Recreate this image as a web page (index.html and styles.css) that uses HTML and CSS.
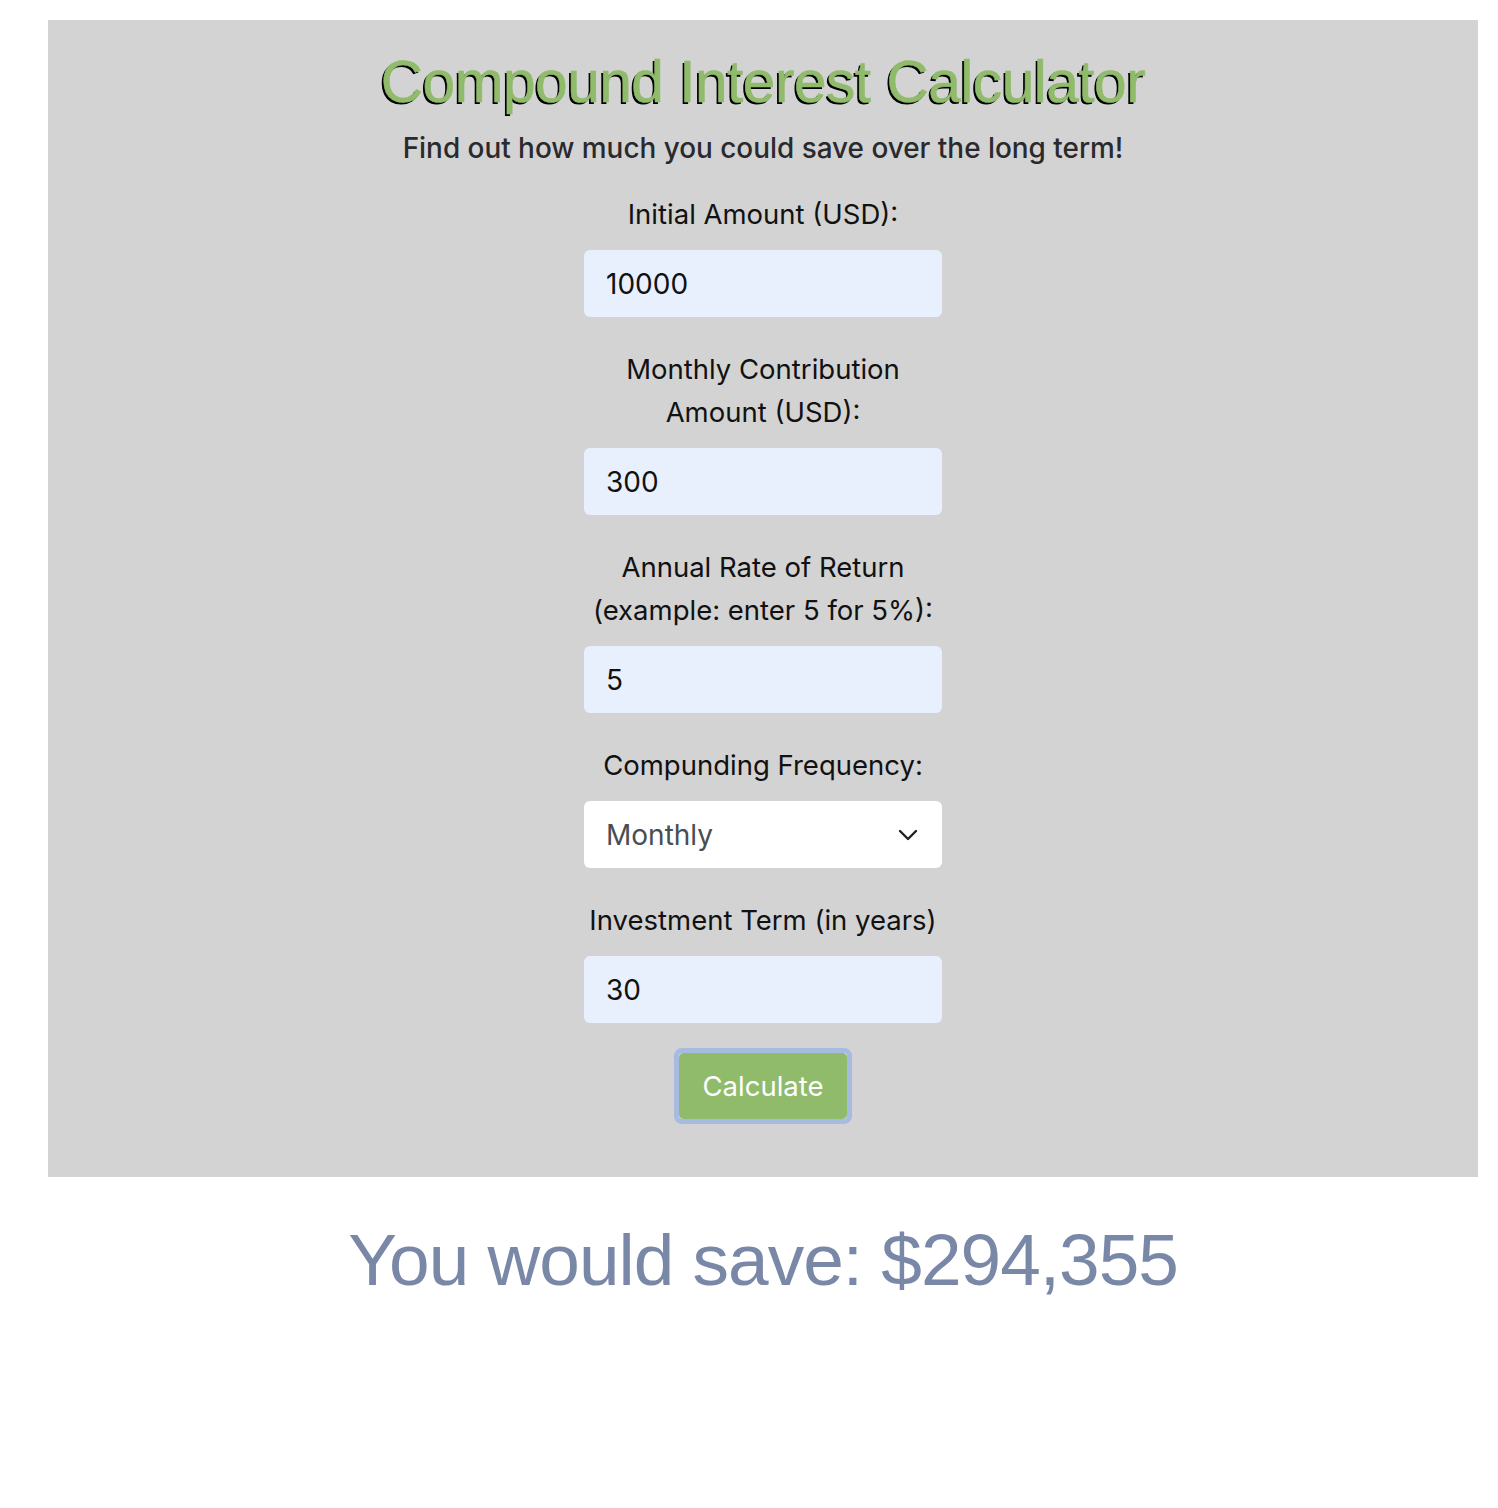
FILE: index.html
```html
<!DOCTYPE html>
<html>
<head>
<meta charset="utf-8">
<link rel="stylesheet" href="styles.css">
</head>
<body>
<div class="page">
  <main class="panel">
    <h1 class="title">Compound Interest Calculator</h1>
    <p class="subtitle">Find out how much you could save over the long term!</p>
    <form class="form">
      <label class="label">Initial Amount (USD):</label>
      <div class="field">10000</div>
      <label class="label">Monthly Contribution Amount (USD):</label>
      <div class="field">300</div>
      <label class="label">Annual Rate of Return (example: enter 5 for 5%):</label>
      <div class="field">5</div>
      <label class="label">Compunding Frequency:</label>
      <div class="select">
        <span>Monthly</span>
        <svg class="chev" width="20" height="12" viewBox="0 0 20 12"><path d="M2 2 L10 10 L18 2" fill="none" stroke="#222" stroke-width="2.4" stroke-linecap="round" stroke-linejoin="round"/></svg>
      </div>
      <label class="label">Investment Term (in years)</label>
      <div class="field">30</div>
      <div class="btn-ring"><span class="btn">Calculate</span></div>
    </form>
  </main>
  <h2 class="result">You would save: $294,355</h2>
</div>
</body>
</html>
```
FILE: styles.css
```css
html, body { margin: 0; padding: 0; background: #fff; }
.page { padding: 20px 20px 0 48px; }
.panel {
  background: #d3d3d3;
  display: flex;
  flex-direction: column;
  align-items: center;
  padding: 30px 0 53px;
}
.title {
  margin: 0;
  font-family: "Liberation Sans", Arial, sans-serif;
  font-weight: 400;
  font-size: 58.6px;
  line-height: 64px;
  color: #8fbb6b;
  text-shadow: -2px 2px 0.5px #000;
  -webkit-text-stroke: 0.6px #8fbb6b;
  letter-spacing: -0.5px;
}
.subtitle {
  margin: 16px 0 0;
  font-family: Inter, "Noto Sans", sans-serif;
  font-weight: 500;
  font-size: 27.9px;
  line-height: 36px;
  color: #2a2a2e;
}
.form {
  width: 358px;
  display: flex;
  flex-direction: column;
  align-items: stretch;
  margin-top: 27px;
}
.label {
  font-family: Inter, "Noto Sans", sans-serif;
  font-size: 27.5px;
  line-height: 43px;
  text-align: center;
  color: #111;
  margin: 0 0 14px;
}
.field, .select {
  height: 67px;
  box-sizing: border-box;
  border-radius: 6px;
  background: #e8f0fe;
  font-family: Inter, "Noto Sans", sans-serif;
  font-size: 28px;
  color: #111;
  padding: 0 22px;
  display: flex;
  align-items: center;
  margin-bottom: 31px;
}
.select {
  background: #fff;
  color: #4a4d52;
  justify-content: space-between;
  padding-right: 24px;
}
.btn-ring {
  align-self: center;
  border: 5px solid #a6bbdf;
  border-radius: 8px;
  margin-top: -6px;
}
.btn {
  display: block;
  background: #8fbb6b;
  color: #fff;
  font-family: Inter, "Noto Sans", sans-serif;
  font-size: 27.5px;
  line-height: 66px;
  padding: 0 23px;
  border-radius: 5px;
}
.result {
  margin: 38px 0 0;
  text-align: center;
  font-family: "Liberation Sans", Arial, sans-serif;
  font-weight: 400;
  font-size: 73px;
  line-height: 90px;
  color: #7a88a8;
  letter-spacing: -1px;
}
```
